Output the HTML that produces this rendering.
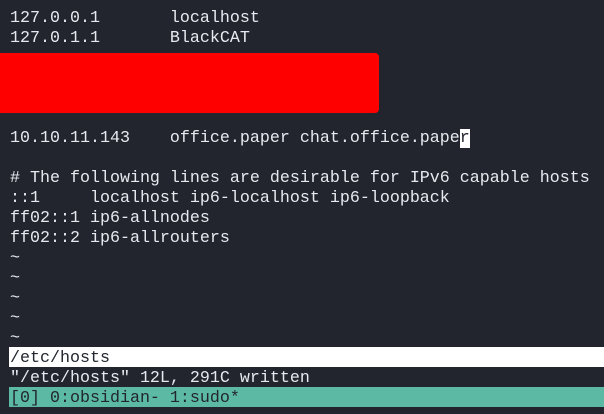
<!DOCTYPE html><html><head><style>
body{margin:0;width:604px;height:414px;background:#23252e;overflow:hidden;position:relative;font-family:"Liberation Mono",monospace;font-size:16.67px;color:#e6e9ef}
.r{position:absolute;left:10px;height:20px;line-height:20px;white-space:pre}
.r>span.t{position:relative;top:2px}
</style></head><body>
<div class="r" style="top:9px">127.0.0.1       localhost</div>
<div class="r" style="top:29px">127.0.1.1       BlackCAT</div>
<div style="position:absolute;left:0;top:53px;width:379px;height:60px;background:#ff0000;border-radius:0 4px 4px 0"></div>
<div class="r" style="top:127px"><span class="t">10.10.11.143    office.paper chat.office.pape<span style="background:#fff;color:#23252e">r</span></span></div>
<div class="r" style="top:169px"># The following lines are desirable for IPv6 capable hosts</div>
<div class="r" style="top:189px">::1     localhost ip6-localhost ip6-loopback</div>
<div class="r" style="top:209px">ff02::1 ip6-allnodes</div>
<div class="r" style="top:229px">ff02::2 ip6-allrouters</div>
<div class="r" style="top:249px">~</div>
<div class="r" style="top:269px">~</div>
<div class="r" style="top:289px">~</div>
<div class="r" style="top:309px">~</div>
<div class="r" style="top:329px">~</div>
<div class="r" style="top:347px;left:9px;width:595px;background:#fff;color:#23252e;padding-left:1px"><span class="t">/etc/hosts</span></div>
<div class="r" style="top:369px">"/etc/hosts" 12L, 291C written</div>
<div class="r" style="top:387px;left:9px;width:595px;background:#5cbaa4;color:#23252e;padding-left:1px"><span class="t">[0] 0:obsidian- 1:sudo*</span></div>
</body></html>
